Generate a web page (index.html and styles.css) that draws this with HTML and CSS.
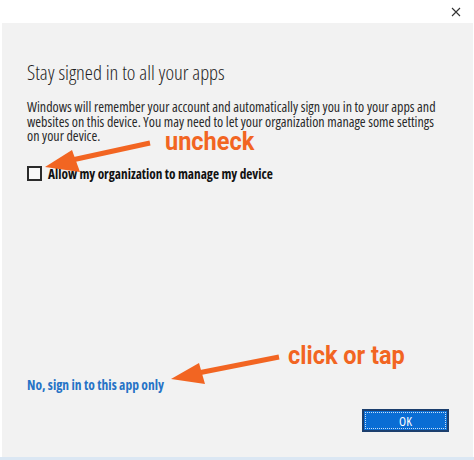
FILE: index.html
```html
<!DOCTYPE html>
<html lang="en">
<head>
  <meta charset="UTF-8" />
  <title>Stay signed in</title>
  <link rel="stylesheet" href="styles.css">
</head>
<body>

<div class="window">
  <div class="titlebar">
    <svg class="close" width="10" height="10" viewBox="0 0 10 10">
      <path d="M1 1 L9 9 M9 1 L1 9" stroke="#333" stroke-width="1.1" />
    </svg>
  </div>

  <div class="panel">
    <h1 class="heading">Stay signed in to all your apps</h1>
    <p class="message">Windows will remember your account and automatically sign you in to your apps and websites on this device. You may need to let your organization manage some settings on your device.</p>

    <label class="check-row">
      <span class="box"></span>
      <span class="check-label">Allow my organization to manage my device</span>
    </label>

    <div class="spacer"></div>

    <a class="app-only" href="#">No, sign in to this app only</a>

    <div class="actions">
      <button class="ok">OK</button>
    </div>
  </div>

  <div class="bottom-line"></div>

  <!-- Annotations drawn over the dialog -->
  <svg class="arrows" width="474" height="460">
    <line x1="150" y1="143" x2="72" y2="160" stroke="#f26522" stroke-width="5" />
    <polygon points="45,167 72,150 80,172" fill="#f26522" />
    <line x1="279" y1="357" x2="198" y2="373" stroke="#f26522" stroke-width="5" />
    <polygon points="171,379 199,363 205,384" fill="#f26522" />
  </svg>
  <div class="note note-uncheck">uncheck</div>
  <div class="note note-tap">click or tap</div>
</div>

</body>
</html>
```

FILE: styles.css
```css
body {
  margin: 0;
  padding: 0;
  background: white;
  font-family: "Open Sans", "Noto Sans", sans-serif;
  font-stretch: 87.5%;
}

.window {
  position: relative;
  width: 474px;
  height: 460px;
  display: flex;
  flex-direction: column;
}

.titlebar {
  height: 23px;
  display: flex;
  justify-content: flex-end;
  align-items: center;
  padding-right: 13px;
}

.close {
  margin-top: 1px;
}

.panel {
  flex: 1;
  margin: 0 1px 0 2px;
  background: #f2f2f2;
  display: flex;
  flex-direction: column;
  padding: 36px 24px 25px 25px;
}

.heading {
  margin: 0;
  font-size: 20.5px;
  font-weight: 300;
  line-height: 27px;
  color: #1f1f1f;
}

.message {
  margin: 14px 0 0;
  max-width: 414px;
  font-size: 14px;
  line-height: 14.5px;
  color: #2a2a2a;
}

.check-row {
  display: flex;
  align-items: center;
  margin-top: 21px;
}

.box {
  width: 11px;
  height: 11px;
  border: 2px solid #2b2b2b;
  background: #f8f8f8;
  margin-right: 6px;
}

.check-label {
  font-size: 13.3px;
  font-weight: 700;
  color: #111;
}

.spacer {
  flex: 1;
}

.app-only {
  font-size: 13.5px;
  font-weight: 700;
  color: #2673c6;
  text-decoration: none;
}

.actions {
  display: flex;
  justify-content: flex-end;
  margin-top: 15px;
}

.ok {
  width: 87px;
  height: 23px;
  background: #0a6dd4;
  border: 2px solid #1c3f6e;
  outline: 1px dotted #c9dff5;
  outline-offset: -4px;
  color: white;
  font-family: "Open Sans", sans-serif;
  font-stretch: 87.5%;
  font-size: 13px;
  padding: 0;
}

.bottom-line {
  height: 3px;
  background: #dbe7f3;
}

.arrows {
  position: absolute;
  top: 0;
  left: 0;
  pointer-events: none;
}

.note {
  position: absolute;
  font-family: Roboto, sans-serif;
  font-weight: 700;
  font-size: 25px;
  font-stretch: 100%;
  color: #f26522;
  transform: scaleX(0.94);
  transform-origin: left top;
  line-height: 1;
}

.note-uncheck {
  top: 129px;
  left: 165px;
}

.note-tap {
  top: 343px;
  left: 288px;
}
```
